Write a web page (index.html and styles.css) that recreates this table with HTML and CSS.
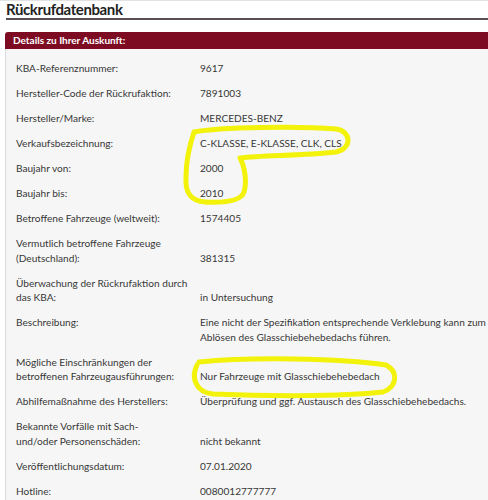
FILE: index.html
```html
<!DOCTYPE html>
<html lang="de">
<head>
<meta charset="utf-8">
<link rel="stylesheet" href="styles.css">
</head>
<body>
<div class="page">
  <h1 class="title">Rückrufdatenbank</h1>
  <section class="panel">
    <div class="panel-head">Details zu Ihrer Auskunft:</div>
    <div class="panel-body">
      <div class="row"><div class="lbl">KBA-Referenznummer:</div><div class="val">9617</div></div>
      <div class="row"><div class="lbl">Hersteller-Code der Rückrufaktion:</div><div class="val">7891003</div></div>
      <div class="row"><div class="lbl">Hersteller/Marke:</div><div class="val">MERCEDES-BENZ</div></div>
      <div class="row"><div class="lbl">Verkaufsbezeichnung:</div><div class="val">C-KLASSE, E-KLASSE, CLK, CLS</div></div>
      <div class="row"><div class="lbl">Baujahr von:</div><div class="val">2000</div></div>
      <div class="row"><div class="lbl">Baujahr bis:</div><div class="val">2010</div></div>
      <div class="row"><div class="lbl">Betroffene Fahrzeuge (weltweit):</div><div class="val">1574405</div></div>
      <div class="row"><div class="lbl">Vermutlich betroffene Fahrzeuge<br>(Deutschland):</div><div class="val">381315</div></div>
      <div class="row"><div class="lbl">Überwachung der Rückrufaktion durch<br>das KBA:</div><div class="val">in Untersuchung</div></div>
      <div class="row top"><div class="lbl">Beschreibung:</div><div class="val">Eine nicht der Spezifikation entsprechende Verklebung kann zum<br>Ablösen des Glasschiebehebedachs führen.</div></div>
      <div class="row"><div class="lbl">Mögliche Einschränkungen der<br>betroffenen Fahrzeugausführungen:</div><div class="val">Nur Fahrzeuge mit Glasschiebehebedach</div></div>
      <div class="row"><div class="lbl">Abhilfemaßnahme des Herstellers:</div><div class="val">Überprüfung und ggf. Austausch des Glasschiebehebedachs.</div></div>
      <div class="row"><div class="lbl">Bekannte Vorfälle mit Sach-<br>und/oder Personenschäden:</div><div class="val">nicht bekannt</div></div>
      <div class="row"><div class="lbl">Veröffentlichungsdatum:</div><div class="val">07.01.2020</div></div>
      <div class="row"><div class="lbl">Hotline:</div><div class="val">0080012777777</div></div>
    </div>
  </section>
  <svg class="marks" width="488" height="500" viewBox="0 0 488 500" aria-hidden="true">
    <path d="M194 131 C 220 126, 300 125, 336 128 C 351 130, 353 147, 336 151 C 300 155, 262 154, 240 157 C 245 166, 247 181, 244 191 C 241 200, 225 202, 205 201 C 190 200, 185 191, 186 176 C 186 161, 189 146, 194 131 Z" />
    <path d="M199 361 C 250 356, 340 357, 386 364 C 399 371, 397 386, 383 391 C 340 396, 260 395, 213 393 C 195 391, 191 376, 197 364" />
  </svg>
</div>
</body>
</html>
```

FILE: styles.css
```css
html, body {
  margin: 0;
  padding: 0;
  background: #ffffff;
}
body {
  font-family: Lato, "Open Sans", sans-serif;
  color: #363636;
}
.page {
  position: relative;
  width: 488px;
  height: 500px;
  overflow: hidden;
  border-top: 1px solid #e2e2e2;
  box-sizing: border-box;
}
.title {
  margin: 0 0 0 6px;
  padding: 0;
  font-size: 15px;
  line-height: 17px;
  letter-spacing: -0.4px;
  font-weight: 700;
  color: #222222;
  border-bottom: 2px solid #5a5054;
}
.panel {
  margin: 12px 0 0 5px;
}
.panel-head {
  background: #7d0c22;
  color: #ffffff;
  font-weight: 700;
  font-size: 10px;
  line-height: 17px;
  padding: 0 8px;
  border-top-left-radius: 3px;
}
.panel-body {
  background: #f6f6f6;
  border-left: 1px solid #d9d9d9;
  padding: 7px 0 0 10px;
  font-size: 10.1px;
  line-height: 14.5px;
}
.row {
  display: grid;
  grid-template-columns: 184px 1fr;
  align-items: end;
  padding: 5.25px 0;
}
.row.top {
  align-items: start;
}
.val {
  white-space: nowrap;
}
.marks {
  position: absolute;
  left: 0;
  top: 0;
  pointer-events: none;
}
.marks path {
  fill: none;
  stroke: #f2f20a;
  stroke-width: 5;
  stroke-linecap: round;
  stroke-linejoin: round;
}
```
